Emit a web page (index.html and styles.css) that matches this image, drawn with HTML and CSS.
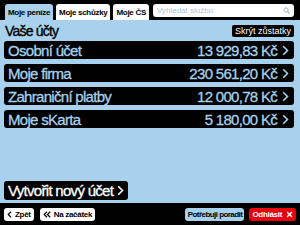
FILE: index.html
```html
<!DOCTYPE html>
<html lang="cs">
<head>
<meta charset="utf-8">
<link rel="stylesheet" href="styles.css">
</head>
<body>
<div class="app">
  <header class="top">
    <div class="tab active">Moje peníze</div>
    <div class="tab">Moje schůzky</div>
    <div class="tab">Moje ČS</div>
    <div class="search">
      <span class="ph">Vyhledat službu</span>
      <svg class="mag" width="7" height="7" viewBox="0 0 7 7"><circle cx="3" cy="3" r="2.2" fill="none" stroke="#9cb9cc" stroke-width="1"/><line x1="4.6" y1="4.6" x2="6.5" y2="6.5" stroke="#9cb9cc" stroke-width="1.2"/></svg>
    </div>
  </header>
  <main class="main">
    <div class="titlebar">
      <h1 class="title">Vaše účty</h1>
      <div class="hide">Skrýt zůstatky</div>
    </div>
    <div class="list">
      <div class="row"><span class="name">Osobní účet</span><span class="amt">13 929,83 Kč<svg class="chev" width="7" height="11" viewBox="0 0 7 11"><path d="M1.2 1.2 L5.5 5.5 L1.2 9.8" fill="none" stroke="#a7d1ec" stroke-width="1.6"/></svg></span></div>
      <div class="row"><span class="name">Moje firma</span><span class="amt">230 561,20 Kč<svg class="chev" width="7" height="11" viewBox="0 0 7 11"><path d="M1.2 1.2 L5.5 5.5 L1.2 9.8" fill="none" stroke="#a7d1ec" stroke-width="1.6"/></svg></span></div>
      <div class="row"><span class="name">Zahraniční platby</span><span class="amt">12 000,78 Kč<svg class="chev" width="7" height="11" viewBox="0 0 7 11"><path d="M1.2 1.2 L5.5 5.5 L1.2 9.8" fill="none" stroke="#a7d1ec" stroke-width="1.6"/></svg></span></div>
      <div class="row"><span class="name">Moje sKarta</span><span class="amt">5 180,00 Kč<svg class="chev" width="7" height="11" viewBox="0 0 7 11"><path d="M1.2 1.2 L5.5 5.5 L1.2 9.8" fill="none" stroke="#a7d1ec" stroke-width="1.6"/></svg></span></div>
    </div>
    <div class="create">Vytvořit nový účet<svg class="chev" width="7" height="11" viewBox="0 0 7 11"><path d="M1.2 1.2 L5.5 5.5 L1.2 9.8" fill="none" stroke="#ffffff" stroke-width="1.6"/></svg></div>
  </main>
  <footer class="bottom">
    <div class="btn white"><svg class="ic" width="5" height="7" viewBox="0 0 5 7"><path d="M4 0.8 L1.2 3.5 L4 6.2" fill="none" stroke="#000" stroke-width="1.2"/></svg>Zpět</div>
    <div class="btn white"><svg class="ic" width="8" height="7" viewBox="0 0 8 7"><path d="M4 0.8 L1.2 3.5 L4 6.2 M7.2 0.8 L4.4 3.5 L7.2 6.2" fill="none" stroke="#000" stroke-width="1.2"/></svg>Na začátek</div>
    <div class="spacer"></div>
    <div class="btn blue">Potřebuji poradit</div>
    <div class="btn red">Odhlásit<svg class="ic" width="7" height="7" viewBox="0 0 7 7"><path d="M1 1 L6 6 M6 1 L1 6" fill="none" stroke="#fff" stroke-width="1.4"/></svg></div>
  </footer>
</div>
</body>
</html>
```
FILE: styles.css
```css
* { box-sizing: border-box; margin: 0; padding: 0; }
html, body { width: 300px; height: 225px; overflow: hidden; }
body { font-family: "Liberation Sans", Arial, sans-serif; background: #000; }
.app { display: flex; flex-direction: column; height: 225px; }
.top { height: 20px; background: #000; display: flex; align-items: flex-end; padding: 0 6px 0 5px; gap: 3px; }
.tab { height: 16px; background: #fff; border-radius: 3px 3px 0 0; font-size: 8px; font-weight: bold; letter-spacing: -0.3px; padding: 0 3px; line-height: 17px; color: #000; }
.tab.active { background: #a7d1ec; }
.search { flex: 1; align-self: flex-start; margin-top: 4px; margin-left: 1px; height: 13px; background: #fff; border-radius: 3px; display: flex; align-items: center; justify-content: space-between; padding: 0 4px; }
.ph { font-size: 8px; color: #a9c6da; }
.main { flex: 1; background: #a7d1ec; display: flex; flex-direction: column; padding: 4px 6px 3px 4px; }
.titlebar { display: flex; justify-content: space-between; align-items: center; height: 13px; }
.title { font-size: 14px; font-weight: normal; letter-spacing: -0.8px; padding-left: 1px; -webkit-text-stroke: 0.35px #000; }
.hide { background: #000; color: #fff; font-size: 9px; padding: 0 3px; height: 12px; line-height: 12px; border-radius: 2px; }
.list { display: flex; flex-direction: column; gap: 5px; margin-top: 4px; }
.row { height: 18px; background: #000; border-radius: 3px; display: flex; justify-content: space-between; align-items: center; padding: 0 5px 0 4px; color: #a7d1ec; font-size: 15px; letter-spacing: -0.7px; -webkit-text-stroke: 0.3px #a7d1ec; }
.amt { display: flex; align-items: center; gap: 5px; }
.create { margin-top: auto; align-self: flex-start; height: 19px; background: #000; color: #fff; border-radius: 3px; font-size: 15px; letter-spacing: -0.7px; -webkit-text-stroke: 0.3px #fff; display: flex; align-items: center; gap: 4px; padding: 0 4px; }
.bottom { height: 22px; background: #000; display: flex; align-items: center; padding: 0 4px; gap: 6px; }
.spacer { flex: 1; }
.btn { height: 13px; border-radius: 3px; font-size: 8px; font-weight: bold; letter-spacing: -0.3px; padding: 0 3px; display: flex; align-items: center; gap: 3px; }
.btn.white { background: #fff; color: #000; }
.btn.blue { background: #a7d1ec; color: #000; margin-right: -1px; letter-spacing: -0.55px; padding: 0 2px 0 3px; }
.btn.red { background: #e8000b; color: #fff; gap: 4px; }
```
